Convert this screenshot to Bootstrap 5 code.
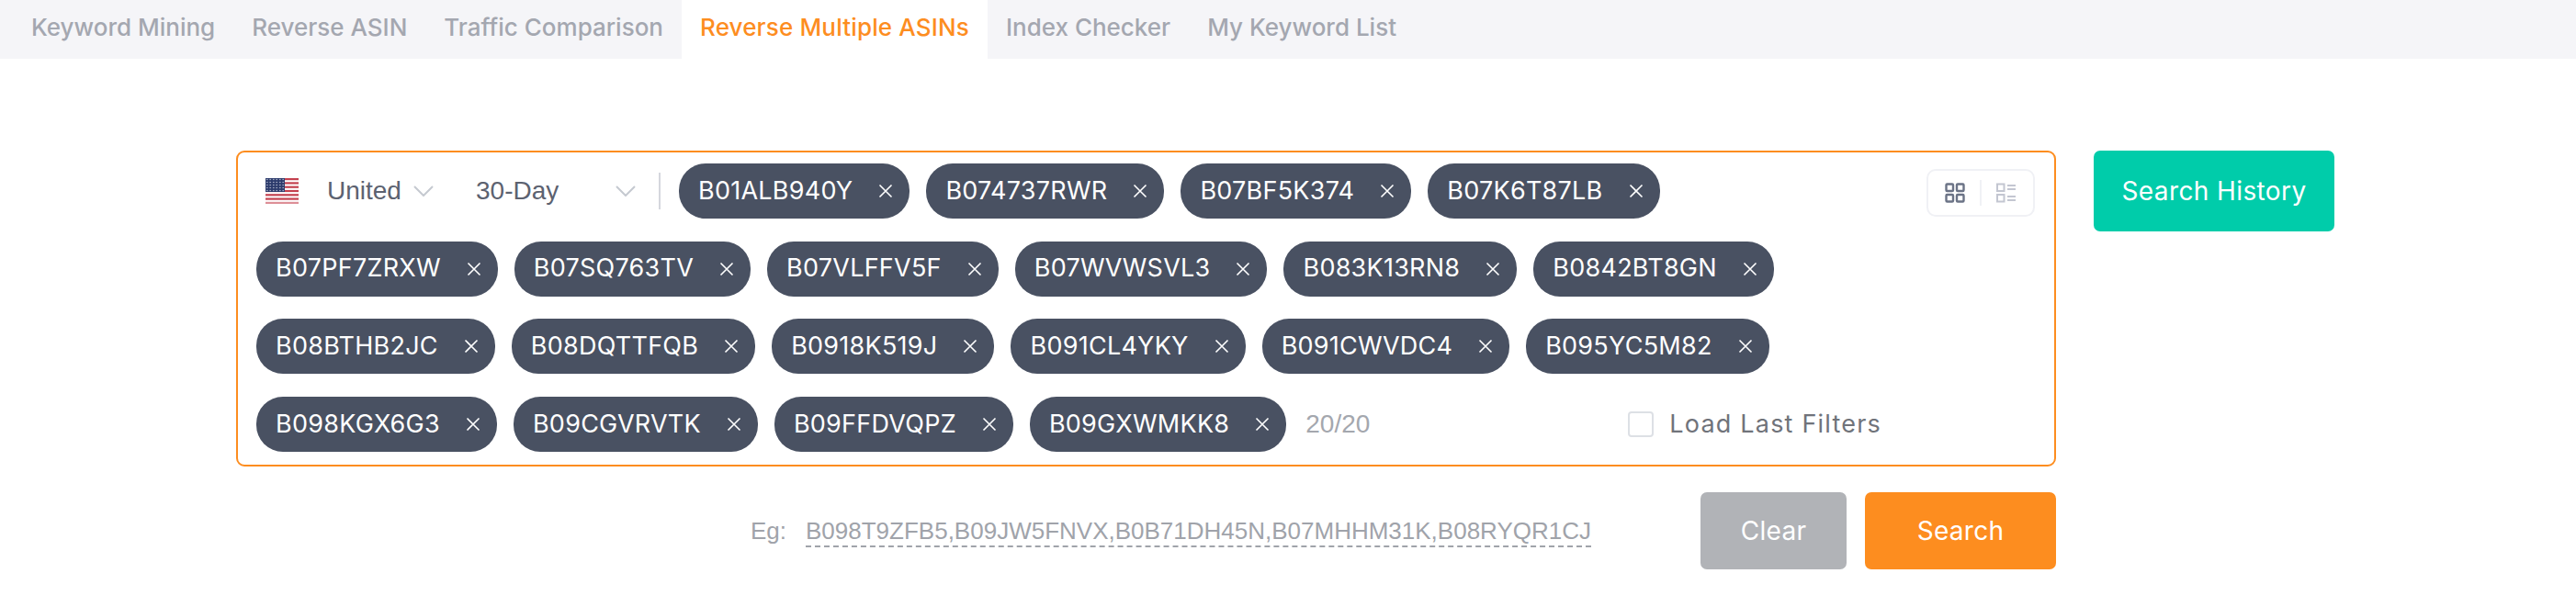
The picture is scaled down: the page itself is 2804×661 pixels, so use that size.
<!DOCTYPE html>
<html lang="en"><head><meta charset="utf-8"><title>Reverse Multiple ASINs</title>
<link rel="stylesheet" href="https://cdn.jsdelivr.net/npm/bootstrap@5.3.0/dist/css/bootstrap.min.css">
<style>
body{font-family:"Inter","Liberation Sans",sans-serif;background:#fff;margin:0}
.tabbar{background:#f5f5f8;height:64px;padding-left:14px}
.tabitem{padding:0 20px;height:64px;line-height:60px;font-size:26px;font-weight:500;color:#a4a7b0;white-space:nowrap}
.tabitem.on{background:#fff;color:#fd8d1f;letter-spacing:.15px}
.stage{padding:100px 0 0 257px}
.searchbox{width:1981px;height:344px;border:2px solid #fd8d1f;border-radius:9px;padding:12px 18px 0 20px;row-gap:24.6px}
.chiprow{height:60px;column-gap:18px}
.flagwrap{width:36px;margin-left:10px;margin-right:13px}
.sel{font-family:"Liberation Sans",sans-serif;font-size:28px;color:#5c6270}
.selregion{width:116px}
.selrange{width:174px;margin-left:28px}
.chip{height:60px;border-radius:29px;background:#495162;color:#fff;font-size:27px;letter-spacing:.25px;padding:0 18px 0 21px;white-space:nowrap}
.chipx{margin-left:28px;width:16px;height:16px}
.vsep{width:2px;height:40px;background:#d5d7dd;margin:0 2px 0 7px}
.viewtoggle{position:absolute;right:21px;top:18px;width:118px;height:52px;border:2px solid #f0f1f5;border-radius:10px;padding:0 18px}
.tdiv{width:2px;height:28px;background:#f0f1f5}
.counter{color:#a4a7ae;font-family:"Liberation Sans",sans-serif;font-size:28px;margin-left:3px}
.fakecheck{width:28px;height:28px;border:2px solid #dde0e5;border-radius:4px;background:#fff;margin-left:263px}
.loadlabel{font-size:27px;color:#70737a;letter-spacing:1.2px;margin-left:-1px}
.sidecol{margin-left:41px}
.histbtn{width:262px;height:88px;background:#00ccaa;color:#fff;font-size:28px;letter-spacing:.4px;border-radius:7px;border:0;padding:0}
.histbtn:hover{background:#00ccaa;color:#fff}
.footrow{width:1981px;margin-top:28px}
.eg{color:#a0a3aa;font-family:"Liberation Sans",sans-serif;font-size:26px}
.egval{border-bottom:2px dashed #a0a3aa;margin-left:21px;padding-bottom:1px}
.actbtn{height:84px;color:#fff;font-size:28px;letter-spacing:.3px;border:0;border-radius:7px;padding:0}
.clearbtn{width:159px;background:#b1b3b7;margin-left:119px}
.clearbtn:hover{background:#b1b3b7;color:#fff}
.gobtn{width:208px;background:#fd8d1f;margin-left:20px}
.gobtn:hover{background:#fd8d1f;color:#fff}
</style></head>
<body>
<nav class="tabbar d-flex">
<span class="tabitem">Keyword Mining</span><span class="tabitem">Reverse ASIN</span><span class="tabitem">Traffic Comparison</span><span class="tabitem on">Reverse Multiple ASINs</span><span class="tabitem">Index Checker</span><span class="tabitem">My Keyword List</span>
</nav>
<main class="stage d-flex align-items-start">
<div>
<div class="searchbox position-relative d-flex flex-column">
<div class="chiprow d-flex align-items-center">
<span class="flagwrap d-flex"><svg width="36" height="28" viewBox="0 0 36 28"><defs><pattern id="stars" width="3.5" height="3" patternUnits="userSpaceOnUse"><circle cx="1.75" cy="1.5" r=".65" fill="#d8dbe8"/></pattern></defs><rect width="36" height="28" fill="#fff"/><g fill="#c4414f"><rect width="36" height="2.2"/><rect y="4.3" width="36" height="2.2"/><rect y="8.6" width="36" height="2.2"/><rect y="12.9" width="36" height="2.2"/><rect y="17.2" width="36" height="2.2"/><rect y="21.5" width="36" height="2.2"/><rect y="25.8" width="36" height="2.2" fill="#dd8f97"/></g><rect width="21" height="15" fill="#2b3a6b"/><rect width="21" height="15" fill="url(#stars)"/></svg></span>
<span class="sel selregion d-flex align-items-center">United<svg class="ms-auto" width="22" height="12" viewBox="0 0 22 12"><path d="M1 1l10 10L21 1" fill="none" stroke="#c5c9d0" stroke-width="2"/></svg></span>
<span class="sel selrange d-flex align-items-center">30-Day<svg class="ms-auto" width="22" height="12" viewBox="0 0 22 12"><path d="M1 1l10 10L21 1" fill="none" stroke="#c5c9d0" stroke-width="2"/></svg></span>
<span class="vsep"></span>
<span class="chiprow d-flex" id="r1"></span>
</div>
<div class="chiprow d-flex align-items-center" id="r2"></div>
<div class="chiprow d-flex align-items-center" id="r3"></div>
<div class="chiprow d-flex align-items-center" id="r4"></div>
<div class="viewtoggle d-flex align-items-center justify-content-between">
<svg width="22" height="22" viewBox="0 0 22 22"><g fill="none" stroke="#6b7386" stroke-width="2.4"><rect x="1.5" y="1.5" width="7.5" height="7.5" rx="1"/><rect x="13" y="1.5" width="7.5" height="7.5" rx="1"/><rect x="1.5" y="13" width="7.5" height="7.5" rx="1"/><rect x="13" y="13" width="7.5" height="7.5" rx="1"/></g></svg>
<span class="tdiv"></span>
<svg width="22" height="22" viewBox="0 0 22 22"><g fill="none" stroke="#c3c6d1" stroke-width="2"><rect x="1" y="1.5" width="7.5" height="7.5"/><rect x="1" y="13" width="7.5" height="7.5"/><path d="M12 3h9M12 7h9M12 15h9M12 19h9"/></g></svg>
</div>
</div>
<div class="footrow d-flex align-items-center justify-content-end">
<span class="eg">Eg:<span class="egval">B098T9ZFB5,B09JW5FNVX,B0B71DH45N,B07MHHM31K,B08RYQR1CJ</span></span>
<button class="btn actbtn clearbtn" type="button">Clear</button>
<button class="btn actbtn gobtn" type="button">Search</button>
</div>
</div>
<div class="sidecol"><button class="btn histbtn" type="button">Search History</button></div>
</main>
<script>
const X='<svg class="chipx" viewBox="0 0 16 16"><path d="M1.5 1.5l13 13M14.5 1.5l-13 13" stroke="#fff" stroke-width="1.6" fill="none"/></svg>';
const rows={r1:["B01ALB940Y","B074737RWR","B07BF5K374","B07K6T87LB"],
r2:["B07PF7ZRXW","B07SQ763TV","B07VLFFV5F","B07WVWSVL3","B083K13RN8","B0842BT8GN"],
r3:["B08BTHB2JC","B08DQTTFQB","B0918K519J","B091CL4YKY","B091CWVDC4","B095YC5M82"],
r4:["B098KGX6G3","B09CGVRVTK","B09FFDVQPZ","B09GXWMKK8"]};
for(const id in rows){const el=document.getElementById(id);
 rows[id].forEach(t=>{const s=document.createElement('span');s.className='chip d-inline-flex align-items-center';s.innerHTML=t+X;el.appendChild(s);});}
document.getElementById('r4').insertAdjacentHTML('beforeend','<span class="counter">20/20</span><span class="fakecheck"></span><span class="loadlabel">Load Last Filters</span>');
</script>
<script src="https://cdn.jsdelivr.net/npm/bootstrap@5.3.0/dist/js/bootstrap.bundle.min.js"></script>
</body></html>
